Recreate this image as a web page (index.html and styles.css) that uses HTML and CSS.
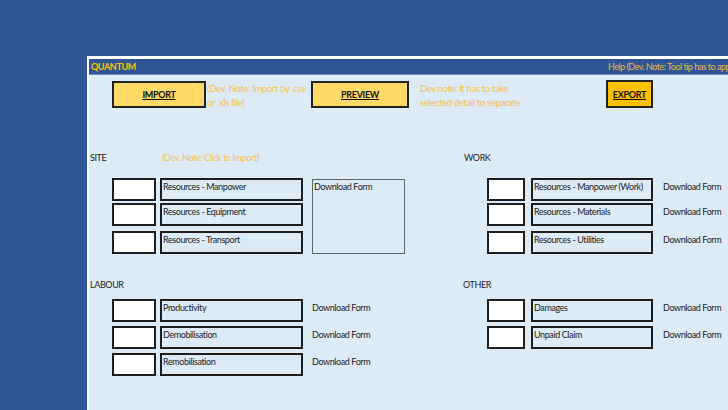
FILE: index.html
```html
<!DOCTYPE html>
<html>
<head>
<meta charset="utf-8">
<link rel="stylesheet" href="styles.css">
</head>
<body>
<div class="panel">
  <div class="header">
    <span class="brand">QUANTUM</span>
    <span class="help">Help (Dev. Note: Tool tip has to appear on hover)</span>
  </div>
  <div class="toolbar">
    <span></span>
    <div class="btn"><span>IMPORT</span></div>
    <p class="note">(Dev. Note: Import by .csv<br>or .xls file)</p>
    <div class="btn"><span>PREVIEW</span></div>
    <span></span>
    <p class="note">Dev.note: It has to take<br>selected detail to separate</p>
    <div class="btn btn-export"><span>EXPORT</span></div>
  </div>
  <div class="sections">
    <div class="col col-left">
      <div class="title title-site"><span class="title-name">SITE</span><span class="title-note">(Dev. Note: Click to Import)</span></div>
      <div class="grid grid-site">
        <div class="box r1"></div><div class="label r1">Resources - Manpower</div>
        <div class="dl-box">Download Form</div>
        <div class="box r2"></div><div class="label r2">Resources - Equipment</div>
        <div class="box r3"></div><div class="label r3">Resources - Transport</div>
      </div>
      <div class="title title-labour"><span class="title-name">LABOUR</span></div>
      <div class="grid grid-labour">
        <div class="box"></div><div class="label">Productivity</div><div class="dl">Download Form</div>
        <div class="box"></div><div class="label">Demobilisation</div><div class="dl">Download Form</div>
        <div class="box"></div><div class="label">Remobilisation</div><div class="dl">Download Form</div>
      </div>
    </div>
    <div class="col col-right">
      <div class="title title-site"><span class="title-name">WORK</span></div>
      <div class="grid grid-work">
        <div class="box"></div><div class="label">Resources - Manpower (Work)</div><div class="dl">Download Form</div>
        <div class="box"></div><div class="label">Resources - Materials</div><div class="dl">Download Form</div>
        <div class="box"></div><div class="label">Resources - Utilities</div><div class="dl">Download Form</div>
      </div>
      <div class="title title-other"><span class="title-name">OTHER</span></div>
      <div class="grid grid-other">
        <div class="box"></div><div class="label">Damages</div><div class="dl">Download Form</div>
        <div class="box"></div><div class="label">Unpaid Claim</div><div class="dl">Download Form</div>
      </div>
    </div>
  </div>
</div>
</body>
</html>
```
FILE: styles.css
```css
* { box-sizing: border-box; }
html, body { margin: 0; padding: 0; }
body {
  width: 728px;
  height: 410px;
  overflow: hidden;
  background: #2f5597;
  font-family: Lato, "Liberation Sans", sans-serif;
  font-size: 9px;
  letter-spacing: -0.4px;
  color: #222;
}
.panel {
  margin: 56px 0 0 87px;
  width: 641px;
  height: 354px;
  border-top: 3px solid #fff;
  border-left: 2px solid #fff;
  background: #ddebf7;
}
.header {
  height: 16px;
  background: #2f5597;
  border-bottom: 1px solid #6f8fc8;
  display: flex;
  align-items: center;
  color: #ffc000;
  line-height: 12px;
}
.brand { padding-left: 2px; font-weight: bold; letter-spacing: -0.4px; }
.help {
  margin-left: auto;
  width: 120px;
  overflow: hidden;
  white-space: nowrap;
  color: #e8b93a;
  letter-spacing: -0.5px;
}
.toolbar {
  display: grid;
  grid-template-columns: 23px 94px 105px 98px 10px 187px 47px;
  margin-top: 6px;
  align-items: start;
}
.btn {
  height: 27px;
  background: #ffd966;
  border: 2px solid #222;
  display: flex;
  align-items: center;
  justify-content: center;
  font-weight: bold;
  font-size: 9px;
  letter-spacing: -0.3px;
  text-decoration: underline;
  color: #111;
}
.btn-export {
  height: 28px;
  margin-top: -1px;
  background: #ffc000;
}
.note {
  margin: 1px 0 0 1px;
  color: #f7c04a;
  font-size: 9.5px;
  letter-spacing: -0.35px;
  line-height: 14px;
  white-space: nowrap;
}
.sections {
  display: grid;
  grid-template-columns: 373px 1fr;
  margin-top: 42px;
}
.title {
  display: flex;
  line-height: 12px;
  height: 12px;
}
.col-left .title-name { padding-left: 1px; width: 73px; }
.col-right .title-name { padding-left: 1px; }
.title-note { color: #f7c04a; }
.title-labour, .title-other { margin-top: 25px; }
.col-right .title-site { padding-left: 1px; }
.grid {
  display: grid;
  align-items: start;
}
.grid-site {
  margin-top: 14px;
  padding-left: 23px;
  grid-template-columns: 44px 143px 98px;
  grid-template-rows: 25px 28px 23px;
  column-gap: 4px;
}
.grid-labour {
  margin-top: 8px;
  padding-left: 23px;
  grid-template-columns: 44px 143px auto;
  grid-auto-rows: 27px;
  column-gap: 4px;
}
.grid-work {
  margin-top: 14px;
  padding-left: 25px;
  grid-template-columns: 38px 122px auto;
  grid-template-rows: 25px 28px 23px;
  column-gap: 6px;
}
.grid-other {
  margin-top: 8px;
  padding-left: 25px;
  grid-template-columns: 38px 122px auto;
  grid-auto-rows: 27px;
  column-gap: 6px;
}
.box {
  height: 23px;
  background: #fff;
  border: 2px solid #1e1e1e;
}
.label {
  height: 23px;
  border: 2px solid #1e1e1e;
  background: #ddebf7;
  padding: 1px 1px;
  line-height: 12px;
  white-space: nowrap;
  overflow: hidden;
}
.grid-site .r1 { grid-row: 1; }
.grid-site .r2 { grid-row: 2; }
.grid-site .r3 { grid-row: 3; }
.grid-site .box { grid-column: 1; }
.grid-site .label { grid-column: 2; }
.dl-box {
  grid-column: 3;
  grid-row: 1 / 4;
  margin: 1px 0 0 5px;
  height: 75px;
  border: 1px solid #666;
  padding: 1px 1px;
  line-height: 12px;
}
.dl {
  padding-top: 3px;
  line-height: 12px;
  white-space: nowrap;
}
.grid-labour .dl { padding-left: 5px; }
.grid-work .dl, .grid-other .dl { padding-left: 4px; }
```
